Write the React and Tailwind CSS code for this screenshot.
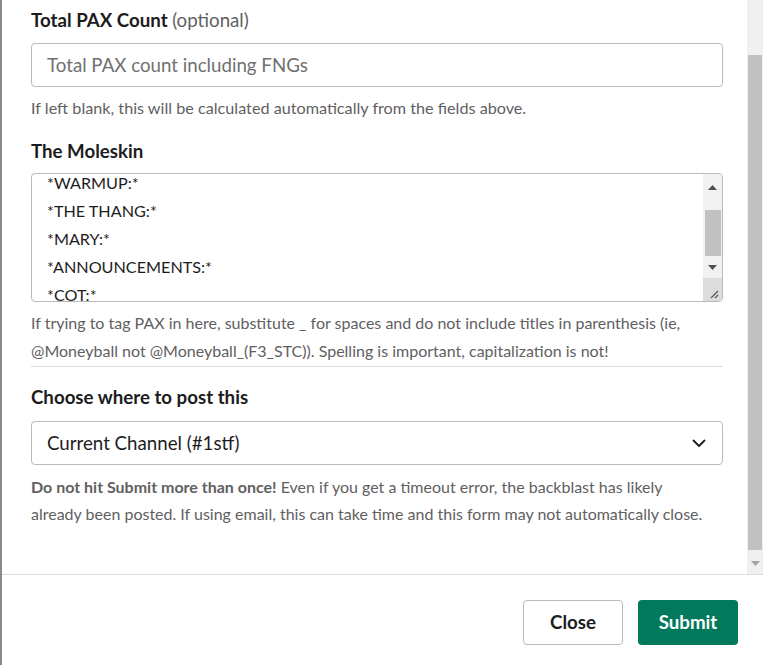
import React from "react";

const lato = { fontFamily: "Lato, 'Noto Sans', sans-serif" };

function TriUp() {
  return (
    <svg width="9" height="5" viewBox="0 0 9 5"><path d="M0 5 L4.5 0 L9 5 Z" fill="#505050" /></svg>
  );
}
function TriDown({ color = "#505050" }) {
  return (
    <svg width="9" height="5" viewBox="0 0 9 5"><path d="M0 0 L4.5 5 L9 0 Z" fill={color} /></svg>
  );
}

export default function App() {
  const lines = ["*WARMUP:*", "*THE THANG:*", "*MARY:*", "*ANNOUNCEMENTS:*", "*COT:*"];
  return (
    <div className="w-[763px] h-[665px] bg-white flex flex-col border-l-2 border-[#8a8a8a] overflow-hidden text-[#1d1c1d]" style={lato}>
      <div className="flex flex-row h-[574px] overflow-hidden">
        <div className="flex-1 pl-[29px] pr-[24px] pt-[8px] flex flex-col">
          <div className="text-[18.7px] leading-[24px] font-bold">
            Total PAX Count <span className="font-normal text-[#616061]">(optional)</span>
          </div>
          <div className="mt-[11px] h-[44px] border border-[#bbbabb] rounded-[4px] px-[15px] flex items-center text-[18.7px] text-[#707070]">
            Total PAX count including FNGs
          </div>
          <div className="mt-[7px] text-[16.2px] leading-[28px] text-[#616061]">
            If left blank, this will be calculated automatically from the fields above.
          </div>
          <div className="mt-[17px] text-[18.7px] leading-[24px] font-bold">The Moleskin</div>
          <div className="mt-[10px] h-[129px] border border-[#bbbabb] rounded-[4px] flex flex-row overflow-hidden">
            <div className="flex-1 overflow-hidden pl-[15px]">
              <div className="-mt-[5px] text-[16.2px] leading-[28px]">
                {lines.map((l) => (
                  <div key={l}>{l}</div>
                ))}
              </div>
            </div>
            <div className="w-[19px] bg-[#f1f1f1] flex flex-col items-center">
              <div className="h-[24px] flex items-center justify-center pt-[2px]"><TriUp /></div>
              <div className="mt-[12px] h-[46px] w-[16px] bg-[#c1c1c1]"></div>
              <div className="h-[22px] flex items-center justify-center"><TriDown /></div>
              <div className="flex-1 w-full bg-[#dcdcdc] flex items-end justify-end pr-[3px] pb-[2px]">
                <svg width="10" height="10" viewBox="0 0 10 10">
                  <path d="M9 2 L2 9 M9 6 L6 9" stroke="#555" strokeWidth="1.2" />
                </svg>
              </div>
            </div>
          </div>
          <div className="mt-[7px] text-[16px] leading-[28px] text-[#616061]">
            If trying to tag PAX in here, substitute _ for spaces and do not include titles in parenthesis (ie, @Moneyball not @Moneyball_(F3_STC)). Spelling is important, capitalization is not!
          </div>
          <div className="mt-[1px] h-px bg-[#dddddd]"></div>
          <div className="mt-[18px] text-[18.7px] leading-[24px] font-bold">Choose where to post this</div>
          <div className="mt-[12px] h-[44px] border border-[#bbbabb] rounded-[4px] pl-[15px] pr-[16px] flex items-center justify-between text-[18.7px]">
            <span>Current Channel (#1stf)</span>
            <svg width="14" height="9" viewBox="0 0 14 9">
              <path d="M1.5 1.5 L7 7 L12.5 1.5" fill="none" stroke="#1d1c1d" strokeWidth="1.8" strokeLinecap="round" strokeLinejoin="round" />
            </svg>
          </div>
          <div className="mt-[8px] max-w-[685px] text-[16px] leading-[27px] text-[#616061]">
            <span className="font-bold">Do not hit Submit more than once!</span> Even if you get a timeout error, the backblast has likely already been posted. If using email, this can take time and this form may not automatically close.
          </div>
        </div>
        <div className="w-[16px] bg-[#f0f0f0] flex flex-col items-center">
          <div className="mt-[55px] h-[495px] w-[14px] bg-[#c1c1c1]"></div>
          <div className="mt-[11px]"><TriDown color="#a3a3a3" /></div>
        </div>
      </div>
      <div className="h-px bg-[#dddddd]"></div>
      <div className="flex-1 flex flex-row justify-end items-start pt-[25px] pr-[25px] gap-[15px]">
        <div className="w-[100px] h-[45px] border border-[#bbbabb] rounded-[4px] flex items-center justify-center text-[18.7px] font-bold">
          Close
        </div>
        <div className="w-[100px] h-[45px] bg-[#007a5a] rounded-[4px] flex items-center justify-center text-[18.7px] font-bold text-white">
          Submit
        </div>
      </div>
    </div>
  );
}
